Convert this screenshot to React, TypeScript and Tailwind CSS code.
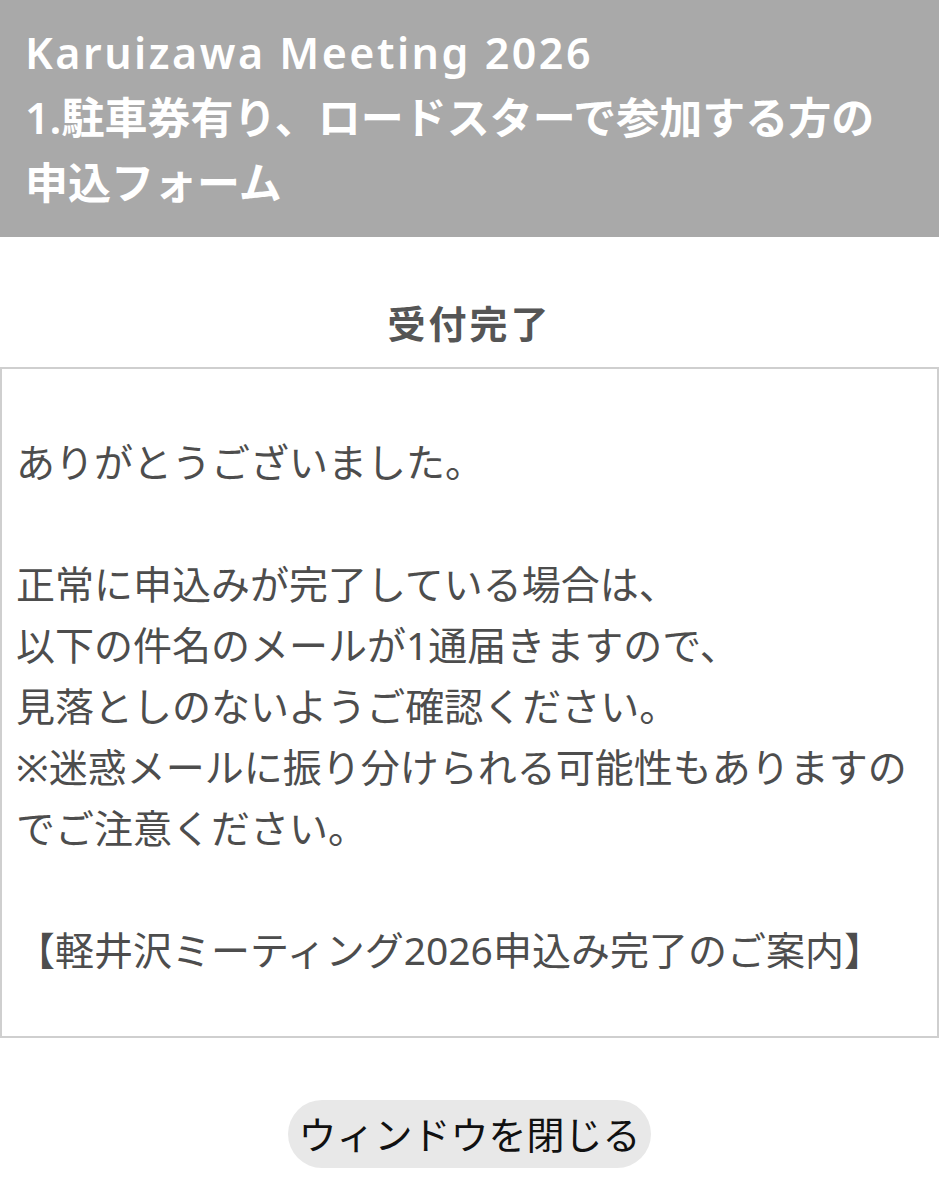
import React from 'react';

const jp = "font-['Noto_Sans','Noto_Sans_CJK_JP',sans-serif]";

export default function App() {
  return (
    <div className={`min-h-[1199px] w-full bg-white ${jp}`}>
      <header className="bg-[#a9a9a9] px-[25px] pt-[20px] pb-[22px] text-[43px] leading-[65px] font-semibold text-white">
        <span className="tracking-[2.5px]">Karuizawa Meeting 2026</span>
        <br />
        1.駐車券有り、ロードスターで参加する方の
        <br />
        申込フォーム
      </header>

      <h2 className="mt-[58px] text-center text-[38px] leading-[56px] font-bold tracking-[3px] text-[#555]">
        受付完了
      </h2>

      <div className="mt-[16px] border-2 border-[#cfcfcf] px-[14px] pt-[62px] pb-[56px] text-[39px] leading-[61px] text-[#4d4d4d] whitespace-nowrap">
        <p>ありがとうございました。</p>
        <p>&nbsp;</p>
        <p>正常に申込みが完了している場合は、</p>
        <p>以下の件名のメールが1通届きますので、</p>
        <p>見落としのないようご確認ください。</p>
        <p>※迷惑メールに振り分けられる可能性もありますの</p>
        <p>でご注意ください。</p>
        <p>&nbsp;</p>
        <p>【軽井沢ミーティング2026申込み完了のご案内】</p>
      </div>

      <div className="mt-[62px] flex justify-center">
        <button
          type="button"
          className="rounded-full bg-[#e8e8e8] px-[10px] h-[68px] text-[38px] leading-[68px] text-[#111]"
        >
          ウィンドウを閉じる
        </button>
      </div>
    </div>
  );
}
